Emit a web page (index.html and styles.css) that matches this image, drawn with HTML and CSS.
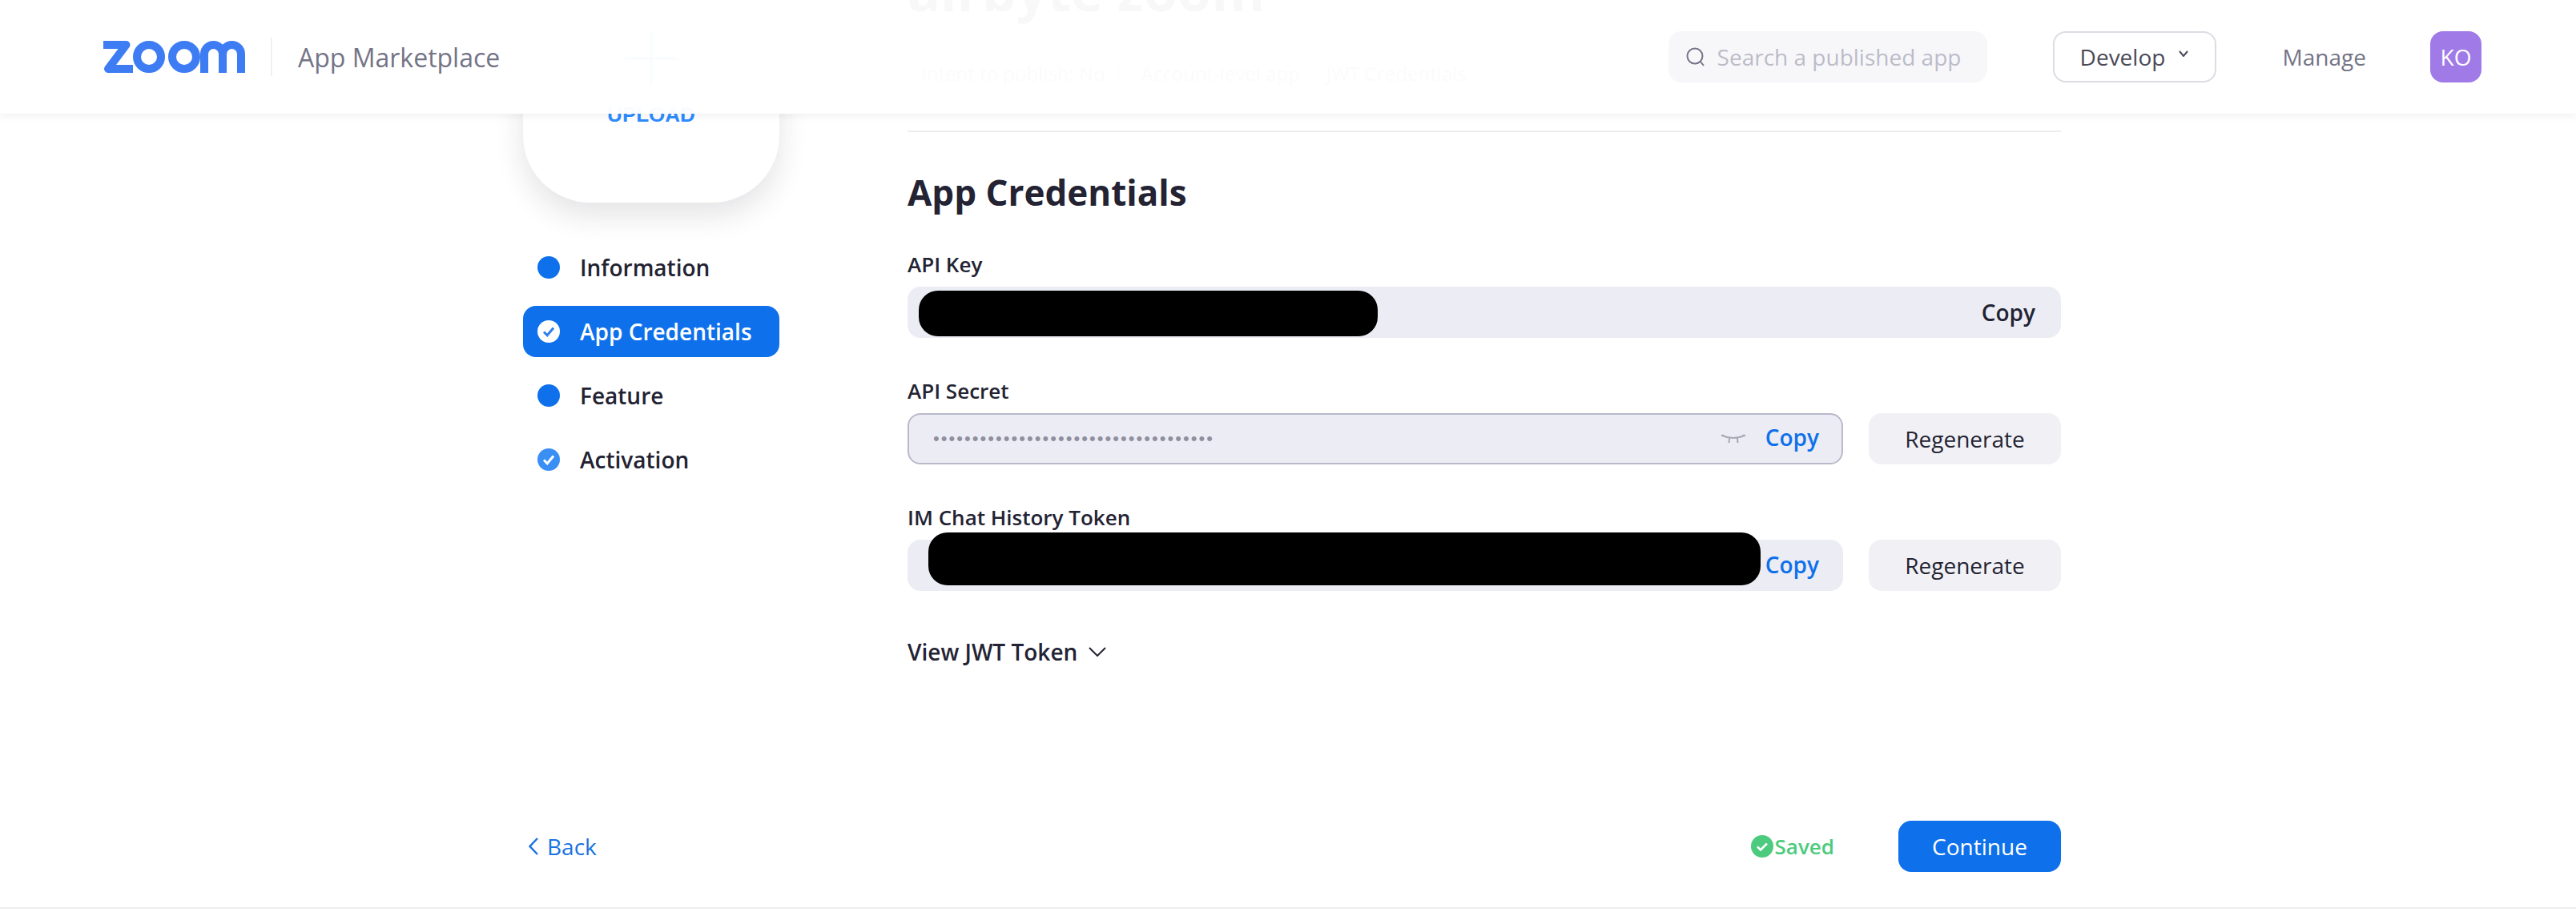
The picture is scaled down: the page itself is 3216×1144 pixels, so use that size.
FILE: index.html
```html
<!DOCTYPE html>
<html lang="en">
<head>
<meta charset="utf-8">
<title>App Credentials - Zoom App Marketplace</title>
<link rel="stylesheet" href="styles.css">
</head>
<body>
<header class="topbar">
  <svg class="logo" viewBox="0 0 178 40" width="178" height="40" aria-label="zoom">
    <g fill="none" stroke="currentColor" stroke-width="10">
      <path d="M1 5H29.500L7 35H38" stroke-linejoin="round"/>
      <circle cx="58" cy="20" r="15"/>
      <circle cx="102" cy="20" r="15"/>
      <path d="M127 40V16.500A11.500 11.500 0 0 1 150 16.500V40M150 16.500A11.500 11.500 0 0 1 173 16.500V40"/>
    </g>
  </svg>
  <span class="logo-divider"></span>
  <span class="brand">App Marketplace</span>
  <div class="search">
    <svg class="search-icon" viewBox="0 0 24 24" width="24" height="24"><circle cx="11" cy="11" r="9.500"/><path d="M18 18l4 5"/></svg>
    <span>Search a published app</span>
  </div>
  <button class="develop">Develop
    <svg viewBox="0 0 14 8" width="14" height="8"><path d="M2 1l5 6 5-6"/></svg>
  </button>
  <span class="manage">Manage</span>
  <span class="avatar">KO</span>
</header>

<div class="page">
  <div class="content">
    <aside class="sidebar">
      <div class="upload">
        <svg class="plus" viewBox="0 0 66 66" width="66" height="66"><path d="M33 0V66M0 33H66"/></svg>
        <span class="upload-text">UPLOAD</span>
      </div>
      <nav class="steps">
        <div class="step"><span class="dot"></span>Information</div>
        <div class="step active">
          <svg class="step-icon" viewBox="0 0 28 28" width="28" height="28"><circle cx="14" cy="14" r="14" fill="#fff"/><path d="M8 14.500l4.200 4.200L20 9.500" fill="none" stroke="#2d7fe8" stroke-width="3"/></svg>
          App Credentials
        </div>
        <div class="step"><span class="dot"></span>Feature</div>
        <div class="step">
          <svg class="step-icon" viewBox="0 0 28 28" width="28" height="28"><circle cx="14" cy="14" r="14" fill="#3a8ff5"/><path d="M8 14.500l4.200 4.200L20 9.500" fill="none" stroke="#fff" stroke-width="3"/></svg>
          Activation
        </div>
      </nav>
    </aside>

    <main class="main">
      <h1 class="app-title">airbyte zoom</h1>
      <div class="tags">
        <span class="tag">Intent to publish: No</span>
        <span class="tag-sep"></span>
        <span class="tag">Account-level app</span>
        <span class="tag">JWT Credentials</span>
      </div>
      <hr class="rule">
      <h2 class="section-title">App Credentials</h2>

      <section class="cred">
        <label class="cred-label">API Key</label>
        <div class="cred-row">
          <div class="field">
            <span class="redact redact-key"></span>
            <span class="copy copy-dark">Copy</span>
          </div>
        </div>
      </section>

      <section class="cred">
        <label class="cred-label">API Secret</label>
        <div class="cred-row">
          <div class="field field-secret">
            <span class="masked">••••••••••••••••••••••••••••••••••••</span>
            <svg class="eye" viewBox="0 0 32 14" width="32" height="14"><path d="M1 2.500Q16 9.500 31 2.500M5 4.500L3 2M11 6.500L10.500 12M21 6.500L21.500 12M27 4.500L29 2"/></svg>
            <span class="copy copy-raised">Copy</span>
          </div>
          <button class="regen">Regenerate</button>
        </div>
      </section>

      <section class="cred">
        <label class="cred-label">IM Chat History Token</label>
        <div class="cred-row">
          <div class="field">
            <span class="redact redact-token"></span>
            <span class="copy">Copy</span>
          </div>
          <button class="regen">Regenerate</button>
        </div>
      </section>

      <div class="jwt">View JWT Token
        <svg viewBox="0 0 22 12" width="22" height="12"><path d="M1 1l10 10L21 1"/></svg>
      </div>
    </main>
  </div>

  <footer class="footer">
    <a class="back">
      <svg viewBox="0 0 12 22" width="12" height="22"><path d="M11 1L1.500 11 11 21"/></svg>
      Back
    </a>
    <span class="saved">
      <svg viewBox="0 0 28 28" width="28" height="28"><circle cx="14" cy="14" r="14" fill="#4ccb7e"/><path d="M8 14.500l4 4 8-8" fill="none" stroke="#fff" stroke-width="2.600"/></svg>
      Saved
    </span>
    <button class="continue">Continue</button>
  </footer>
</div>
</body>
</html>
```

FILE: styles.css
```css
* { box-sizing: border-box; }

html, body {
  margin: 0;
  height: 1144px;
  overflow: hidden;
  background: #fff;
}

body {
  position: relative;
  font-family: "Open Sans", "Noto Sans", sans-serif;
  font-size: 28px;
  color: #232333;
}

button {
  font: inherit;
  cursor: pointer;
}

/* top bar, lying over the scrolled page */
.topbar {
  position: absolute;
  top: 0;
  left: 0;
  right: 0;
  z-index: 5;
  height: 142px;
  display: flex;
  align-items: center;
  padding: 0 118px 0 128px;
  background: rgba(255, 255, 255, .97);
  box-shadow: 0 2px 10px rgba(35, 35, 51, .07);
}

.logo { color: #3d7cf3; flex: none; }

.logo-divider {
  width: 2px;
  height: 48px;
  margin-left: 32px;
  background: #f0f0f3;
}

.brand {
  margin-left: 32px;
  font-size: 32px;
  color: #747487;
}

.search {
  display: flex;
  align-items: center;
  gap: 15px;
  width: 398px;
  height: 64px;
  margin-left: auto;
  padding-left: 22px;
  border-radius: 16px;
  background: #f7f7fa;
  color: #bcbcc8;
}

.search-icon {
  fill: none;
  stroke: #747487;
  stroke-width: 2;
}

.develop {
  display: flex;
  align-items: center;
  gap: 16px;
  width: 204px;
  height: 64px;
  margin-left: 82px;
  padding: 0 0 0 32px;
  border: 2px solid #dcdce4;
  border-radius: 16px;
  background: #fff;
  color: #4a4a57;
}

.develop svg {
  margin-top: -8px;
  fill: none;
  stroke: #4a4a57;
  stroke-width: 2;
}

.manage {
  margin-left: 83px;
  color: #747487;
}

.avatar {
  display: flex;
  align-items: center;
  justify-content: center;
  width: 64px;
  height: 64px;
  margin-left: 80px;
  border-radius: 16px;
  background: #a07ae6;
  color: #fff;
}

/* scrolled page */
.page {
  display: flex;
  flex-direction: column;
  height: 1135px;
  padding: 0 643px 44px 653px;
  border-bottom: 2px solid #ededf0;
  overflow: hidden;
}

.content {
  display: flex;
  gap: 160px;
  margin-top: -67px;
}

.sidebar {
  width: 320px;
  flex: none;
}

.upload {
  display: flex;
  flex-direction: column;
  align-items: center;
  height: 320px;
  padding-top: 107px;
  border-radius: 84px;
  background: #fff;
  box-shadow: 0 16px 36px rgba(35, 35, 51, .12);
}

.plus {
  fill: none;
  stroke: #0e71eb;
  stroke-width: 3;
  opacity: .7;
  flex: none;
}

.upload-text {
  margin-top: 21px;
  font-family: "Liberation Sans", sans-serif;
  font-size: 26px;
  font-weight: 700;
  line-height: 32px;
  color: #2d8cff;
}

.steps {
  display: flex;
  flex-direction: column;
  gap: 16px;
  margin-top: 49px;
}

.step {
  display: flex;
  align-items: center;
  gap: 25px;
  height: 64px;
  padding-left: 18px;
  border-radius: 16px;
  font-weight: 600;
}

.step.active {
  background: #0e71eb;
  color: #fff;
}

.dot {
  width: 28px;
  height: 28px;
  flex: none;
  border-radius: 50%;
  background: #0e71eb;
}

.step-icon { flex: none; }

.main {
  flex: 1;
  min-width: 0;
}

.app-title {
  margin: 9px 0 0;
  font-size: 68px;
  font-weight: 700;
  line-height: 92px;
  color: #232333;
}

.tags {
  display: flex;
  align-items: center;
  height: 40px;
  margin-top: 37px;
  font-size: 24px;
  color: #747487;
}

.tag { padding: 0 16px 0 17px; }

.tag-sep {
  width: 2px;
  height: 32px;
  margin: 0 10px 0 0;
  background: #dcdce4;
}

.rule {
  height: 2px;
  margin: 52px 0 0;
  border: 0;
  background: #ededf0;
}

.section-title {
  margin: 47px 0 44px;
  font-size: 44px;
  font-weight: 700;
  line-height: 56px;
}

.cred { margin-bottom: 48px; }

.cred-label {
  display: block;
  margin-bottom: 10px;
  font-size: 26px;
  font-weight: 600;
  line-height: 36px;
}

.cred-row {
  display: flex;
  gap: 32px;
}

.field {
  position: relative;
  flex: 1;
  display: flex;
  align-items: center;
  justify-content: flex-end;
  height: 64px;
  padding-right: 30px;
  border-radius: 16px;
  background: #ecedf4;
}

.field-secret { border: 2px solid #bab9cb; padding-right: 28px; }

.masked {
  margin-right: auto;
  padding-left: 30px;
  font-family: "Liberation Sans", sans-serif;
  font-size: 22px;
  letter-spacing: 2.050px;
  color: #8f8fa0;
}

.eye {
  margin-right: 24px;
  fill: none;
  stroke: #a7a7b3;
  stroke-width: 2;
}

.copy {
  font-weight: 600;
  color: #0e71eb;
  padding-bottom: 3px;
}

.copy-raised { padding-bottom: 4px; }

.copy-dark { color: #232333; margin-right: 2px; padding-bottom: 0; }

.redact {
  position: absolute;
  background: #000;
  border-radius: 24px;
}

.redact-key { left: 14px; top: 5px; width: 573px; height: 57px; }
.redact-token { left: 26px; top: -9px; width: 1039px; height: 66px; }

.regen {
  width: 240px;
  height: 64px;
  flex: none;
  border: 0;
  border-radius: 16px;
  background: #f1f1f5;
  color: #232333;
}

.jwt {
  display: flex;
  align-items: center;
  gap: 14px;
  margin-top: 56px;
  font-weight: 600;
  line-height: 40px;
}

.jwt svg {
  fill: none;
  stroke: #232333;
  stroke-width: 2;
}

.footer {
  display: flex;
  align-items: center;
  margin-top: auto;
}

.back {
  display: flex;
  align-items: center;
  gap: 11px;
  padding-left: 7px;
  color: #1a73e0;
}

.back svg {
  fill: none;
  stroke: #1a73e0;
  stroke-width: 2.500;
}

.saved {
  display: flex;
  align-items: center;
  gap: 2px;
  margin-left: auto;
  font-size: 26px;
  font-weight: 600;
  color: #4ccb7e;
}

.continue {
  width: 203px;
  height: 64px;
  margin-left: 80px;
  border: 0;
  border-radius: 16px;
  background: #0e71eb;
  color: #fff;
}
```
